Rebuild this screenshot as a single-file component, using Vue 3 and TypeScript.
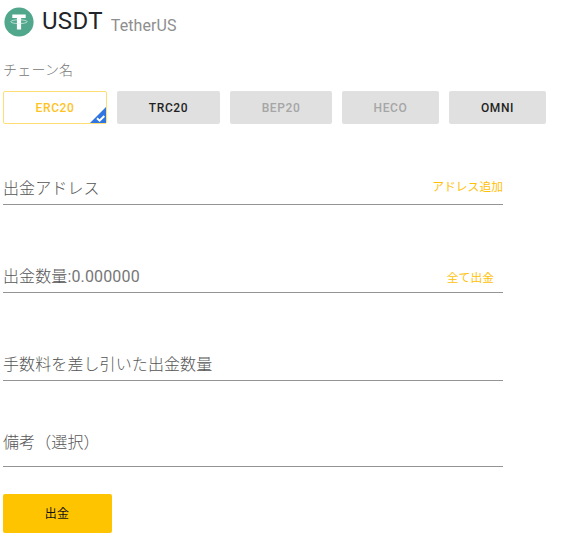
<script setup lang="ts">
import { ref } from 'vue'

interface Chain {
  name: string
  size: string
  disabled?: boolean
}

interface Field {
  key: string
  label: string
  value?: string
  action?: string
}

const chains: Chain[] = [
  { name: 'ERC20', size: 'w104' },
  { name: 'TRC20', size: 'w103' },
  { name: 'BEP20', size: 'w102', disabled: true },
  { name: 'HECO', size: 'w97', disabled: true },
  { name: 'OMNI', size: 'w97' },
]
const selected = ref('ERC20')

const fields: Field[] = [
  { key: 'address', label: '出金アドレス', action: 'アドレス追加' },
  { key: 'amount', label: '出金数量', value: ':0.000000', action: '全て出金' },
  { key: 'net', label: '手数料を差し引いた出金数量' },
  { key: 'memo', label: '備考（選択）' },
]
</script>

<template>
  <main class="withdraw">
    <header class="coin">
      <svg class="logo" viewBox="0 0 30 30">
        <circle cx="15" cy="15" r="14.6" fill="#50a78b" />
        <path d="M8.300 7.500h13.400v3.400h-4.600v11.600h-4.200V10.900H8.300z" fill="#fff" />
        <ellipse cx="15" cy="14.700" rx="8.200" ry="1.900" fill="none" stroke="#e4f3ee" stroke-width="0.7" />
      </svg>
      <span class="symbol">USDT</span>
      <span class="name">TetherUS</span>
    </header>

    <p class="caption">チェーン名</p>
    <div class="chains">
      <button
        v-for="c in chains"
        :key="c.name"
        class="chain"
        :class="[c.size, { selected: c.name === selected }]"
        :disabled="c.disabled"
        @click="selected = c.name"
      >
        {{ c.name }}
        <svg v-if="c.name === selected" class="mark" viewBox="0 0 16 16">
          <path d="M16 0v16H0z" fill="#2f74e0" />
          <path d="M7 11.200l2.600 2.500 4.700-4.700" fill="none" stroke="#fff" stroke-width="2" />
        </svg>
      </button>
    </div>

    <section class="fields">
      <div v-for="f in fields" :key="f.key" class="field" :class="f.key">
        <span class="label">{{ f.label }}<span v-if="f.value" class="value">{{ f.value }}</span></span>
        <a v-if="f.action" class="action">{{ f.action }}</a>
      </div>
    </section>

    <button class="submit">出金</button>
  </main>
</template>

<style>
body {
  background: #fff;
}
</style>

<style scoped>
.withdraw {
  box-sizing: border-box;
  height: 543px;
  padding: 6px 0 0 3px;
  font-family: Roboto, 'Noto Sans CJK JP', sans-serif;
  color: #212529;
  overflow: hidden;
}
.coin {
  display: flex;
  align-items: center;
  height: 31px;
}
.logo {
  width: 30px;
  height: 30px;
  margin-left: 1px;
}
.symbol {
  margin: -2px 0 0 8px;
  font-size: 24px;
  line-height: 30px;
  letter-spacing: 0.3px;
}
.name {
  margin: 9px 0 0 8px;
  font-size: 16px;
  line-height: 20px;
  letter-spacing: 0.1px;
  color: #8e8e8e;
}
.caption {
  margin: 23px 0 0;
  height: 31px;
  font-size: 14px;
  line-height: 20px;
  font-weight: 300;
  letter-spacing: 0.2px;
  color: #777;
}
.chains {
  display: flex;
  gap: 10px;
}
.chain {
  position: relative;
  box-sizing: border-box;
  height: 33px;
  padding: 0;
  border: 0;
  border-radius: 2px;
  background: #e0e0e0;
  color: #1f1f1f;
  font-family: inherit;
  font-size: 12px;
  font-weight: 500;
  letter-spacing: 0.6px;
}
.w104 { width: 104px; }
.w103 { width: 103px; }
.w102 { width: 102px; }
.w97 { width: 97px; }
.chain:disabled {
  color: #a6a6a6;
}
.chain.selected {
  border: 1px solid #ffdf75;
  background: #fff;
  color: #ffc31f;
}
.mark {
  position: absolute;
  right: 0;
  bottom: 0;
  width: 16px;
  height: 16px;
}
.fields {
  width: 500px;
  padding-top: 43px;
}
.field {
  box-sizing: border-box;
  display: flex;
  justify-content: space-between;
  height: 38px;
  margin-bottom: 50px;
  padding-top: 10px;
  border-bottom: 1px solid #949494;
}
.field.net {
  margin-bottom: 42px;
}
.field.memo {
  height: 44px;
  margin-bottom: 27px;
  padding-top: 8px;
}
.label {
  font-size: 16px;
  line-height: 24px;
  font-weight: 300;
  letter-spacing: 0.1px;
  color: #555;
}
.value {
  font-weight: 400;
  letter-spacing: 0.15px;
  color: #777;
}
.action {
  font-size: 11.8px;
  line-height: 20px;
  color: #ffc107;
}
.amount .action {
  margin: 3px 9px 0 0;
}
.submit {
  display: block;
  width: 109px;
  height: 39px;
  padding: 0 1px 2px 0;
  border: 0;
  border-radius: 2px;
  background: #ffc400;
  color: #111;
  font-family: inherit;
  font-size: 12px;
  letter-spacing: 0.3px;
}
</style>
